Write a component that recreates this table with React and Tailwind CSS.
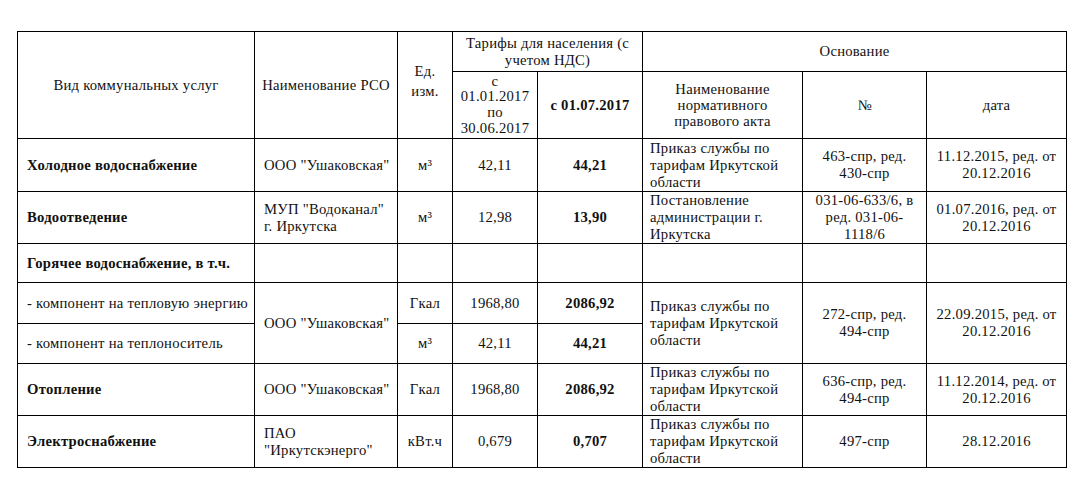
const cell = 'border border-black align-middle';

function Br({ lines }) {
  return lines.map((l, i) => (
    <span key={i}>
      {l}
      {i < lines.length - 1 && <br />}
    </span>
  ));
}

const prikaz = ['Приказ службы по', 'тарифам Иркутской', 'области'];

export default function App() {
  return (
    <div className="min-h-screen bg-white pt-[31px] pl-[17px] text-black font-serif text-[14.67px] leading-[17px]">
      <table className="table-fixed border-collapse w-[1050px] font-['Liberation_Serif','Times_New_Roman',serif] text-[14.67px] leading-[17px] tracking-[0.25px] text-[#111]">
        <colgroup>
          <col className="w-[237px]" />
          <col className="w-[143px]" />
          <col className="w-[55px]" />
          <col className="w-[85px]" />
          <col className="w-[105px]" />
          <col className="w-[160px]" />
          <col className="w-[124px]" />
          <col className="w-[140px]" />
        </colgroup>
        <thead>
          <tr className="h-[40px]">
            <th rowSpan={2} className={`${cell} font-normal text-center px-[7px]`}>Вид коммунальных услуг</th>
            <th rowSpan={2} className={`${cell} font-normal text-center px-[2px] whitespace-nowrap`}>Наименование РСО</th>
            <th rowSpan={2} className={`${cell} font-normal text-center px-[2px] pb-[8px] leading-[20px]`}>
              <Br lines={['Ед.', 'изм.']} />
            </th>
            <th colSpan={2} className={`${cell} font-normal text-center leading-[16.5px]`}>
              <Br lines={['Тарифы для населения (с', 'учетом НДС)']} />
            </th>
            <th colSpan={3} className={`${cell} font-normal text-center`}>Основание</th>
          </tr>
          <tr className="h-[67px]">
            <th className={`${cell} font-normal text-center leading-[15.7px]`}>
              <Br lines={['с', '01.01.2017', 'по', '30.06.2017']} />
            </th>
            <th className={`${cell} font-bold text-center`}>с 01.07.2017</th>
            <th className={`${cell} font-normal text-center leading-[16.3px]`}>
              <Br lines={['Наименование', 'нормативного', 'правового акта']} />
            </th>
            <th className={`${cell} font-normal text-center`}>№</th>
            <th className={`${cell} font-normal text-center`}>дата</th>
          </tr>
        </thead>
        <tbody>
          <tr className="h-[53px]">
            <td className={`${cell} font-bold pl-[9px]`}>Холодное водоснабжение</td>
            <td className={`${cell} pl-[9px] whitespace-nowrap`}>ООО "Ушаковская"</td>
            <td className={`${cell} text-center`}>м³</td>
            <td className={`${cell} text-center`}>42,11</td>
            <td className={`${cell} text-center font-bold`}>44,21</td>
            <td className={`${cell} pl-[7px]`}><Br lines={prikaz} /></td>
            <td className={`${cell} text-center`}><Br lines={['463-спр, ред.', '430-спр']} /></td>
            <td className={`${cell} text-center`}><Br lines={['11.12.2015, ред. от', '20.12.2016']} /></td>
          </tr>
          <tr className="h-[51px]">
            <td className={`${cell} font-bold pl-[9px]`}>Водоотведение</td>
            <td className={`${cell} pl-[9px]`}><Br lines={['МУП "Водоканал"', 'г. Иркутска']} /></td>
            <td className={`${cell} text-center`}>м³</td>
            <td className={`${cell} text-center`}>12,98</td>
            <td className={`${cell} text-center font-bold`}>13,90</td>
            <td className={`${cell} pl-[7px]`}><Br lines={['Постановление', 'администрации г.', 'Иркутска']} /></td>
            <td className={`${cell} text-center`}><Br lines={['031-06-633/6, в', 'ред. 031-06-', '1118/6']} /></td>
            <td className={`${cell} text-center`}><Br lines={['01.07.2016, ред. от', '20.12.2016']} /></td>
          </tr>
          <tr className="h-[39px]">
            <td className={`${cell} font-bold pl-[9px]`}>Горячее водоснабжение, в т.ч.</td>
            <td className={cell}></td>
            <td className={cell}></td>
            <td className={cell}></td>
            <td className={cell}></td>
            <td className={cell}></td>
            <td className={cell}></td>
            <td className={cell}></td>
          </tr>
          <tr className="h-[41px]">
            <td className={`${cell} pl-[9px] whitespace-nowrap`}>- компонент на тепловую энергию</td>
            <td rowSpan={2} className={`${cell} pl-[9px] whitespace-nowrap`}>ООО "Ушаковская"</td>
            <td className={`${cell} text-center`}>Гкал</td>
            <td className={`${cell} text-center`}>1968,80</td>
            <td className={`${cell} text-center font-bold`}>2086,92</td>
            <td rowSpan={2} className={`${cell} pl-[7px]`}><Br lines={prikaz} /></td>
            <td rowSpan={2} className={`${cell} text-center`}><Br lines={['272-спр, ред.', '494-спр']} /></td>
            <td rowSpan={2} className={`${cell} text-center`}><Br lines={['22.09.2015, ред. от', '20.12.2016']} /></td>
          </tr>
          <tr className="h-[40px]">
            <td className={`${cell} pl-[9px]`}>- компонент на теплоноситель</td>
            <td className={`${cell} text-center`}>м³</td>
            <td className={`${cell} text-center`}>42,11</td>
            <td className={`${cell} text-center font-bold`}>44,21</td>
          </tr>
          <tr className="h-[51px]">
            <td className={`${cell} font-bold pl-[9px]`}>Отопление</td>
            <td className={`${cell} pl-[9px] whitespace-nowrap`}>ООО "Ушаковская"</td>
            <td className={`${cell} text-center`}>Гкал</td>
            <td className={`${cell} text-center`}>1968,80</td>
            <td className={`${cell} text-center font-bold`}>2086,92</td>
            <td className={`${cell} pl-[7px]`}><Br lines={prikaz} /></td>
            <td className={`${cell} text-center`}><Br lines={['636-спр, ред.', '494-спр']} /></td>
            <td className={`${cell} text-center`}><Br lines={['11.12.2014, ред. от', '20.12.2016']} /></td>
          </tr>
          <tr className="h-[51px]">
            <td className={`${cell} font-bold pl-[9px]`}>Электроснабжение</td>
            <td className={`${cell} pl-[9px]`}><Br lines={['ПАО', '"Иркутскэнерго"']} /></td>
            <td className={`${cell} text-center`}>кВт.ч</td>
            <td className={`${cell} text-center`}>0,679</td>
            <td className={`${cell} text-center font-bold`}>0,707</td>
            <td className={`${cell} pl-[7px]`}><Br lines={prikaz} /></td>
            <td className={`${cell} text-center`}>497-спр</td>
            <td className={`${cell} text-center`}>28.12.2016</td>
          </tr>
        </tbody>
      </table>
    </div>
  );
}
